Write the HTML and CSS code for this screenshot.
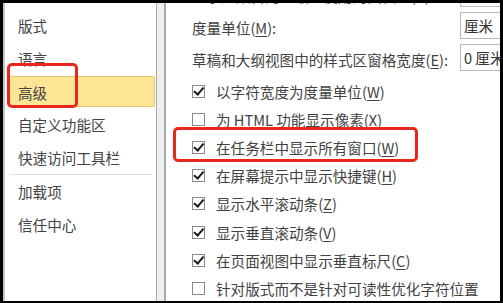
FILE: index.html
```html
<!DOCTYPE html>
<html lang="zh-CN">
<head>
  <meta charset="UTF-8">
  <meta name="viewport" content="width=device-width, initial-scale=1.0">
  <title>Word 选项 - 高级</title>
  <link rel="stylesheet" href="styles.css">
</head>
<body>
  <div class="window">
    <div class="sidebar">
      <div class="nav-item">版式</div>
      <div class="nav-item">语言</div>
      <div class="nav-item active">高级</div>
      <div class="nav-item">自定义功能区</div>
      <div class="nav-item">快速访问工具栏</div>
      <div class="nav-sep"></div>
      <div class="nav-item">加载项</div>
      <div class="nav-item">信任中心</div>
    </div>
    <div class="splitter"></div>
    <div class="content">
      <div class="field-row clipped">
        <span class="field-label">显示此数目的“最近使用的文档”(R):</span>
        <span class="field-input">25</span>
      </div>
      <div class="field-row">
        <span class="field-label">度量单位(<u>M</u>):</span>
        <span class="field-input">厘米</span>
      </div>
      <div class="field-row">
        <span class="field-label">草稿和大纲视图中的样式区窗格宽度(<u>E</u>):</span>
        <span class="field-input">0 厘米</span>
      </div>
      <div class="check-list">
        <div class="check-row"><span class="box on"></span>以字符宽度为度量单位(<u>W</u>)</div>
        <div class="check-row"><span class="box"></span>为 HTML 功能显示像素(<u>X</u>)</div>
        <div class="check-row"><span class="box on"></span>在任务栏中显示所有窗口(<u>W</u>)</div>
        <div class="check-row"><span class="box on"></span>在屏幕提示中显示快捷键(<u>H</u>)</div>
        <div class="check-row"><span class="box on"></span>显示水平滚动条(<u>Z</u>)</div>
        <div class="check-row"><span class="box on"></span>显示垂直滚动条(<u>V</u>)</div>
        <div class="check-row"><span class="box on"></span>在页面视图中显示垂直标尺(<u>C</u>)</div>
        <div class="check-row"><span class="box"></span>针对版式而不是针对可读性优化字符位置</div>
      </div>
    </div>
    <div class="mark mark-nav"></div>
    <div class="mark mark-check"></div>
  </div>
</body>
</html>
```

FILE: styles.css
```css
body {
  margin: 0;
  background: #000;
  font-family: 'Noto Sans CJK SC', 'Noto Sans', sans-serif;
  font-size: 14.6px;
  color: #424242;
}
.window {
  width: 503px;
  height: 303px;
  box-sizing: border-box;
  border: 3px solid #000;
  border-bottom-width: 2px;
  background: #fff;
  display: flex;
  position: relative;
  overflow: hidden;
}
.sidebar {
  width: 151px;
  flex: none;
  border-left: 2px solid #c6c6c6;
  padding-top: 5.5px;
  background: #fff;
}
.nav-item {
  height: 33px;
  line-height: 33px;
  padding-left: 13px;
  white-space: nowrap;
}
.nav-item.active {
  height: 31px;
  line-height: 31px;
  margin: 1px 1px 1px 3px;
  padding-left: 9px;
  border: 1px solid #e9c56a;
  border-radius: 2px;
  background: #fde596;
  box-sizing: border-box;
}
.nav-sep {
  height: 1px;
  background: #dcdcdc;
  margin: 0 4px 0 5px;
}
.splitter {
  width: 7px;
  flex: none;
  background: #efefef;
  border-left: 1px solid #a9a9a9;
  border-right: 2px solid #a9a9a9;
}
.content {
  flex: 1;
  padding-left: 26px;
  overflow: hidden;
  white-space: nowrap;
}
.field-row {
  display: grid;
  grid-template-columns: 268px 90px;
  align-items: center;
  height: 27px;
  margin-bottom: 5px;
}
.field-row.clipped {
  margin-top: -23px;
}
.field-label {
  padding-top: 3px;
}
.field-input {
  height: 27px;
  box-sizing: border-box;
  border: 1px solid #b9b9b9;
  padding: 1px 0 0 3px;
  line-height: 24px;
  color: #333;
}
.check-list {
  padding-top: 1px;
}
.check-row {
  height: 28.2px;
  display: flex;
  align-items: center;
}
.box {
  width: 13px;
  height: 13px;
  box-sizing: border-box;
  border: 1px solid #8a8a8a;
  background: #fff;
  margin-right: 11px;
  flex: none;
  position: relative;
}
.box.on::after {
  content: '';
  position: absolute;
  left: 3px;
  top: -1px;
  width: 3.5px;
  height: 7.5px;
  border: solid #1a1a1a;
  border-width: 0 2.5px 2.5px 0;
  transform: rotate(40deg);
}
u {
  text-underline-offset: 2px;
}
.mark {
  position: absolute;
  border: 3px solid #e8281f;
  border-radius: 5px;
  box-sizing: border-box;
}
.mark-nav {
  left: 4px;
  top: 60px;
  width: 71px;
  height: 45px;
}
.mark-check {
  left: 170px;
  top: 124px;
  width: 245px;
  height: 35px;
}
```
